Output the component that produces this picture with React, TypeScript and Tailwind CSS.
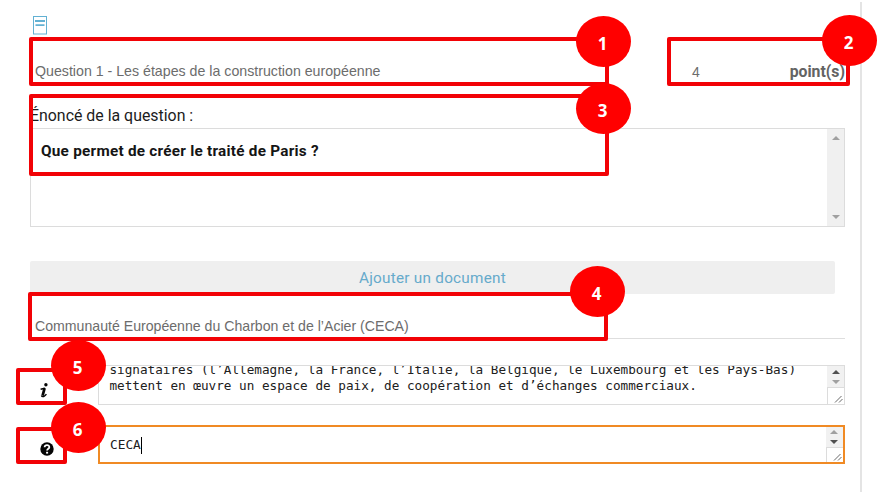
import React from "react";

type Mark = { n: number; box: string; dot: string };

const marks: Mark[] = [
  { n: 1, box: "left-[29px] top-[37px] w-[580px] h-[49px]", dot: "left-[576px] top-[16px]" },
  { n: 2, box: "left-[667px] top-[37px] w-[183px] h-[49px]", dot: "left-[822px] top-[15px]" },
  { n: 3, box: "left-[29px] top-[94px] w-[580px] h-[82px]", dot: "left-[576px] top-[83px]" },
  { n: 4, box: "left-[28px] top-[292px] w-[580px] h-[49px]", dot: "left-[570px] top-[266px]" },
  { n: 5, box: "left-[16px] top-[368px] w-[51px] h-[37px]", dot: "left-[51px] top-[340px]" },
  { n: 6, box: "left-[16px] top-[427px] w-[51px] h-[37px]", dot: "left-[51px] top-[402px]" },
];

function Arrow({ down, dark }: { down?: boolean; dark?: boolean }) {
  return (
    <svg width="8" height="4" viewBox="0 0 8 4" className={dark ? "fill-[#505050]" : "fill-[#a0a0a0]"}>
      <path d={down ? "M0 0H8L4 4Z" : "M0 4H8L4 0Z"} />
    </svg>
  );
}

function Grip() {
  return (
    <svg width="9" height="8" viewBox="0 0 9 8" fill="none" stroke="#6b6b6b" strokeWidth="1">
      <path d="M1 7.5L7.5 1M5 7.5L8.5 4" />
    </svg>
  );
}

function MiniScroll({ up }: { up: boolean }) {
  return (
    <div className="flex w-[17px] shrink-0 flex-col">
      <div
        className={`flex flex-col items-center justify-between bg-[#f1f1f1] ${
          up ? "h-[21px] pt-[4px] pb-[3px]" : "h-[20px] pt-[3px] pr-px pb-[3px]"
        }`}
      >
        <Arrow dark={up} />
        <Arrow down dark={!up} />
      </div>
      <div className="flex flex-1 items-end justify-end border-t border-l border-[#dcdcdc] pr-px pb-px">
        <Grip />
      </div>
    </div>
  );
}

export default function App() {
  return (
    <div className="relative h-[504px] w-[886px] overflow-hidden bg-white pt-[2px] font-['Roboto',sans-serif]">
      <main className="flex h-[490px] w-[862px] flex-col border-r-2 border-[#e4e4e4] pr-[15px]">
        <div className="flex h-[53px] items-start pt-[14px] pl-[33px]">
          <svg width="14" height="19" viewBox="0 0 14 19" fill="none" stroke="#62b1d3">
            <rect x="0.5" y="0.5" width="13" height="17.5" />
            <path d="M2 5H12M2.5 9.2H11.5" strokeWidth="1.8" />
          </svg>
        </div>

        <div className="flex h-[32px] items-center pt-[2px] pl-[35px] font-['Liberation_Sans',Arial,sans-serif] text-[14.2px] text-[#6c6c6c]">
          <span className="w-[657px] whitespace-nowrap">Question 1 - Les étapes de la construction européenne</span>
          <span className="text-[14px]">4</span>
          <span className="ml-auto font-['Roboto',sans-serif] text-[15.8px] font-bold text-[#636363]">point(s)</span>
        </div>

        <div className="flex h-[41px] items-end pb-[2px] pl-[30px] text-[15.9px] leading-[20px] text-[#1c1c1c]">Énoncé de la question :</div>

        <div className="ml-[30px] flex h-[99px] shrink-0 border border-[#dcdcdc]">
          <p className="flex-1 pt-[12px] pl-[10px] text-[15.3px] leading-[20px] font-bold tracking-[0.25px] text-[#151515]">Que permet de créer le traité de Paris ?</p>
          <div className="flex w-[17px] flex-col items-center justify-between bg-[#f0f0f0] py-[7px]">
            <Arrow />
            <Arrow down />
          </div>
        </div>

        <button className="mt-[34px] mr-[10px] ml-[30px] h-[33px] shrink-0 rounded-[2px] bg-[#efefef] pt-[2px] text-[15.3px] tracking-[0.25px] text-[#66aacb]">Ajouter un document</button>

        <div className="ml-[30px] flex h-[45px] shrink-0 items-end border-b border-[#dedede] pb-[3px] pl-[5px] font-['Liberation_Sans',Arial,sans-serif] text-[14.13px] leading-[18px] text-[#6c6c6c]">
          Communauté Européenne du Charbon et de l’Acier (CECA)
        </div>

        <div className="mt-[26px] flex h-[40px] shrink-0">
          <div className="flex w-[98px] items-center pt-[10px] pl-[40px]">
            <svg width="8" height="15" viewBox="0 0 8 15" fill="none" stroke="#050505">
              <circle cx="5.9" cy="1.8" r="1.7" fill="#050505" stroke="none" />
              <path d="M.6 6.3L5 5.2" strokeWidth="1.4" />
              <path d="M4.6 5.2L2.6 12.6" strokeWidth="2.7" />
              <path d="M1.4 12.5C2.2 14.6 5 13.4 6.4 11.2" strokeWidth="1.4" />
            </svg>
          </div>
          <div className="flex flex-1 overflow-hidden border border-[#dcdcdc]">
            <div className="-mt-[4px] flex-1 pl-[10.4px] font-['DejaVu_Sans_Mono',monospace] text-[12.68px] leading-[16px] whitespace-nowrap text-[#202020]">
              <div>signataires (l’Allemagne, la France, l’Italie, la Belgique, le Luxembourg et les Pays-Bas)</div>
              <div>mettent en œuvre un espace de paix, de coopération et d’échanges commerciaux.</div>
            </div>
            <MiniScroll up />
          </div>
        </div>

        <div className="mt-[20px] flex h-[39px] shrink-0">
          <div className="flex w-[98px] items-center pt-[9px] pl-[40px]">
            <svg width="14" height="14" viewBox="0 0 14 14" fill="none">
              <circle cx="7" cy="7" r="6.7" fill="#050505" />
              <path d="M4.6 5.2C4.8 2.4 9.4 2.5 9.3 5.2C9.3 6.8 7.1 6.7 7.1 8.6" stroke="#fff" strokeWidth="1.8" />
              <path d="M6.1 9.8H8.1V11.6H6.1Z" fill="#fff" />
            </svg>
          </div>
          <div className="flex flex-1 overflow-hidden border-2 border-[#f08a24]">
            <div className="flex flex-1 items-center pt-px pl-[10px] font-['DejaVu_Sans_Mono',monospace] text-[12.8px] text-[#202020]">
              CECA
              <span className="h-[17px] w-px bg-black" />
            </div>
            <MiniScroll up={false} />
          </div>
        </div>
      </main>

      {marks.map((m) => (
        <React.Fragment key={m.n}>
          <div className={`absolute rounded-[2px] border-4 border-[#f20206] ${m.box}`} />
          <div
            className={`absolute flex h-[51px] w-[55px] items-center justify-center rounded-[50%] bg-[#ff0000] pt-[4px] pr-[2px] font-['Noto_Sans',sans-serif] text-[17px] leading-none font-bold text-white ${m.dot}`}
          >
            {m.n}
          </div>
        </React.Fragment>
      ))}
    </div>
  );
}
